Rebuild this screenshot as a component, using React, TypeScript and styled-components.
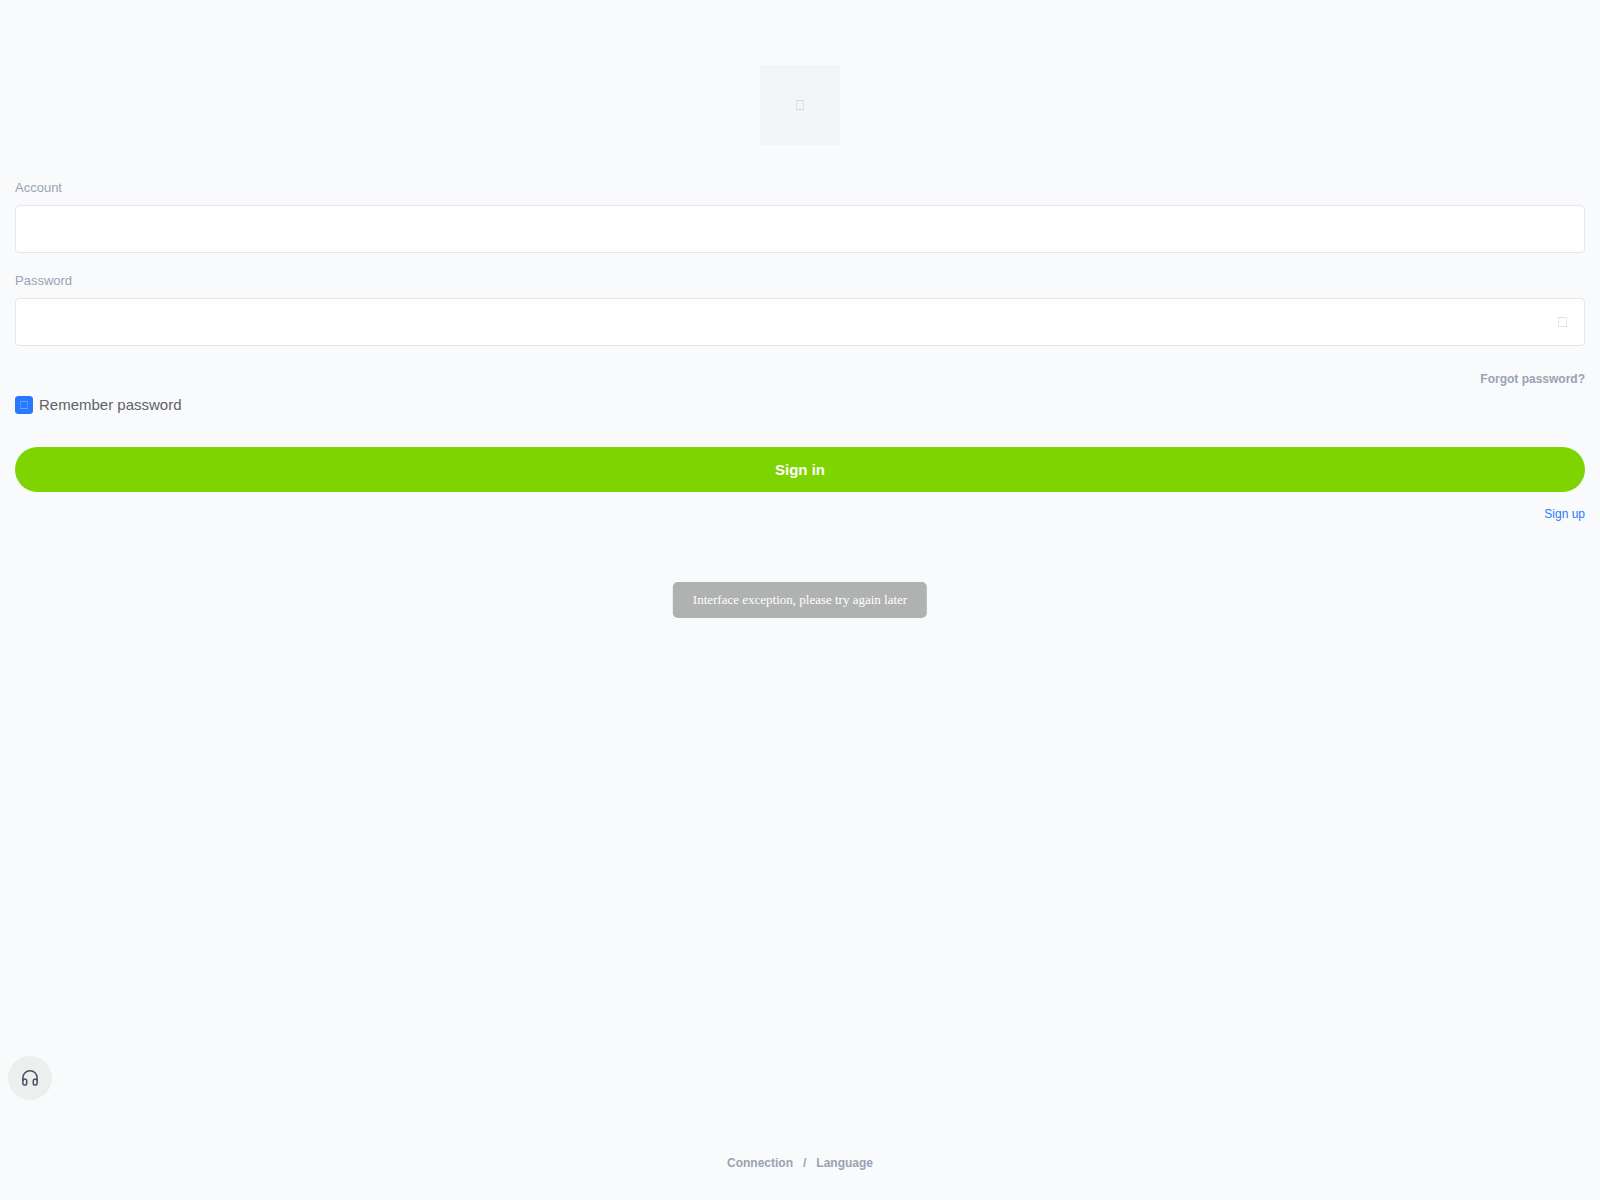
import React, { useState } from "react";
import styled, { createGlobalStyle } from "styled-components";

const GlobalStyle = createGlobalStyle`
  *, *::before, *::after { box-sizing: border-box; }
  body {
    margin: 0;
    background: #f9fafc;
    font-family: "Liberation Sans", Arial, sans-serif;
  }
`;

const Page = styled.main`
  min-height: 100vh;
  display: flex;
  flex-direction: column;
  padding: 65px 15px 30px;
`;

const Logo = styled.div`
  width: 80px;
  height: 80px;
  align-self: center;
  display: grid;
  place-items: center;
  background: #f4f5f7;
  color: #d7d8db;
`;

const Form = styled.form`
  display: flex;
  flex-direction: column;
  padding-top: 35px;
`;

const Field = styled.div`
  display: flex;
  flex-direction: column;
  gap: 10px;
  margin-bottom: 20px;
`;

const Label = styled.label`
  font-size: 13px;
  line-height: 15px;
  color: #9aa3b2;
`;

const InputBox = styled.div`
  height: 48px;
  display: flex;
  align-items: center;
  padding: 0 17px;
  background: #fff;
  border: 1px solid #e6e6e8;
  border-radius: 4px;
`;

const TextInput = styled.input`
  flex: 1;
  min-width: 0;
  height: 100%;
  padding: 0;
  border: 0;
  outline: 0;
  background: transparent;
  font: inherit;
  font-size: 15px;
  color: #303133;
`;

const RevealButton = styled.button`
  display: flex;
  padding: 0;
  border: 0;
  background: transparent;
  color: #e4dfe0;
  cursor: pointer;
`;

const ForgotLink = styled.a`
  align-self: flex-end;
  margin-top: 6px;
  font-size: 12px;
  line-height: 14px;
  font-weight: bold;
  color: #9aa3b2;
  text-decoration: none;
`;

const Remember = styled.label`
  align-self: flex-start;
  display: flex;
  align-items: center;
  gap: 6px;
  margin: 10px 0 33px;
  font-size: 15px;
  line-height: 18px;
  color: #606266;
  cursor: pointer;
`;

const CheckHolder = styled.span`
  display: grid;
  place-items: center;
  width: 18px;
  height: 18px;
  color: #659fff;

  > * { grid-area: 1 / 1; }
  > svg { pointer-events: none; }
`;

const Checkbox = styled.input`
  appearance: none;
  width: 18px;
  height: 18px;
  margin: 0;
  border: 1px solid #c8c9cc;
  border-radius: 3px;
  background: #fff;

  &:checked {
    border-color: #2979ff;
    background: #2979ff;
  }
`;

const SubmitButton = styled.button`
  height: 45px;
  border: 0;
  border-radius: 23px;
  background: #7dd400;
  color: #fff;
  font: bold 15px/18px "Liberation Sans", Arial, sans-serif;
  cursor: pointer;
`;

const SignUpLink = styled.a`
  align-self: flex-end;
  margin-top: 15px;
  font-size: 12px;
  line-height: 14px;
  color: #2979ff;
  text-decoration: none;
`;

const Toast = styled.div`
  position: fixed;
  top: 50%;
  left: 50%;
  transform: translate(-50%, -50%);
  padding: 10px 20px;
  border-radius: 5px;
  background: #b0b2b1;
  color: #fff;
  font-family: "Liberation Serif", "Times New Roman", serif;
  font-size: 13px;
  line-height: 16px;
  white-space: nowrap;
`;

const SupportButton = styled.button`
  position: fixed;
  left: 8px;
  bottom: 100px;
  width: 44px;
  height: 44px;
  display: grid;
  place-items: center;
  padding: 0;
  border: 0;
  border-radius: 50%;
  background: #edeeee;
  color: #465066;
  cursor: pointer;
`;

const Footer = styled.footer`
  display: flex;
  justify-content: center;
  gap: 10px;
  margin-top: auto;
  font-size: 12px;
  line-height: 14px;
  font-weight: bold;
  color: #9aa3b2;
`;

const FooterLink = styled.a`
  color: inherit;
  text-decoration: none;
`;

function BoxGlyph({ width, height }: { width: number; height: number }) {
  return (
    <svg width={width} height={height} aria-hidden="true">
      <path d={`M0 0.5H${width}M0 ${height - 0.5}H${width}`} stroke="currentColor" />
      <path d={`M0.5 1V${height - 1}M${width - 0.5} 1V${height - 1}`} stroke="currentColor" opacity="0.7" />
    </svg>
  );
}

function Headphones() {
  return (
    <svg width="18" height="18" viewBox="0 0 18 18" fill="none" stroke="currentColor" strokeWidth="1.5" aria-hidden="true">
      <path d="M1.9 12V8.8a7.1 7.1 0 0 1 14.2 0V12" />
      <path d="M1.9 10.2h2.6a1.2 1.2 0 0 1 1.2 1.2v3.4a1.2 1.2 0 0 1-1.2 1.2H3.4a1.5 1.5 0 0 1-1.5-1.5zM16.1 10.2h-2.6a1.2 1.2 0 0 0-1.2 1.2v3.4a1.2 1.2 0 0 0 1.2 1.2h1.1a1.5 1.5 0 0 0 1.5-1.5z" />
    </svg>
  );
}

export default function App() {
  const [remember, setRemember] = useState(true);
  const [visible, setVisible] = useState(false);

  return (
    <>
      <GlobalStyle />
      <Page>
        <Logo><BoxGlyph width={8} height={10} /></Logo>
        <Form onSubmit={(e) => e.preventDefault()}>
          <Field>
            <Label htmlFor="account">Account</Label>
            <InputBox>
              <TextInput id="account" type="text" autoComplete="username" />
            </InputBox>
          </Field>
          <Field>
            <Label htmlFor="password">Password</Label>
            <InputBox>
              <TextInput id="password" type={visible ? "text" : "password"} autoComplete="current-password" />
              <RevealButton type="button" aria-label="Show password" onClick={() => setVisible(!visible)}>
                <BoxGlyph width={9} height={10} />
              </RevealButton>
            </InputBox>
          </Field>
          <ForgotLink href="#forgot">Forgot password?</ForgotLink>
          <Remember>
            <CheckHolder>
              <Checkbox type="checkbox" checked={remember} onChange={(e) => setRemember(e.target.checked)} />
              {remember && <BoxGlyph width={8} height={8} />}
            </CheckHolder>
            Remember password
          </Remember>
          <SubmitButton type="submit">Sign in</SubmitButton>
          <SignUpLink href="#signup">Sign up</SignUpLink>
        </Form>
        <Footer>
          <FooterLink href="#connection">Connection</FooterLink>
          <span>/</span>
          <FooterLink href="#language">Language</FooterLink>
        </Footer>
      </Page>
      <Toast role="alert">Interface exception, please try again later</Toast>
      <SupportButton type="button" aria-label="Customer support"><Headphones /></SupportButton>
    </>
  );
}
